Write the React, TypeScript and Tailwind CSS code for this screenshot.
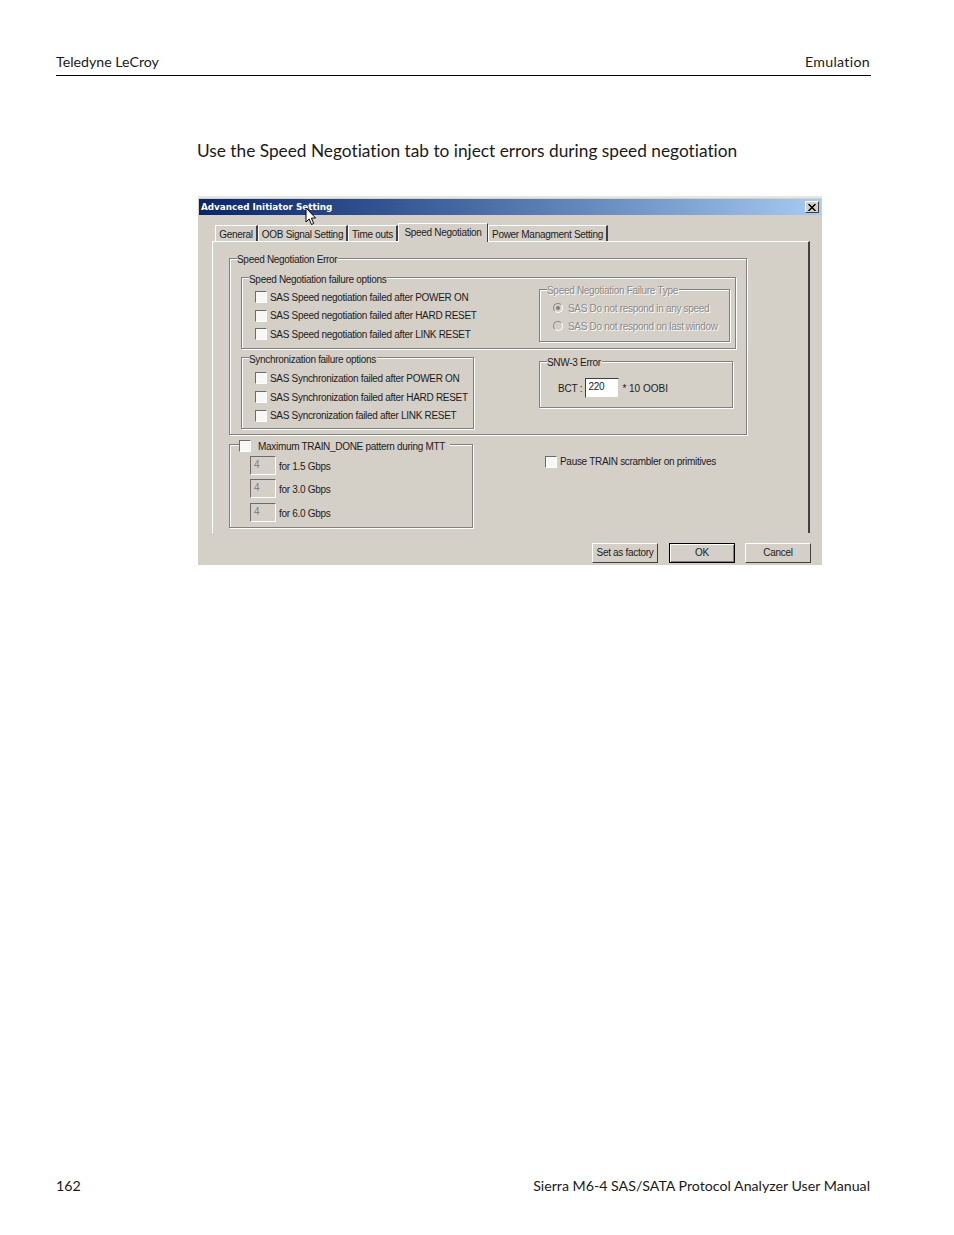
const ui = "font-['Liberation_Sans',Arial,sans-serif] text-[10px] tracking-[-0.3px] leading-[14px] text-[#1c1c1c] whitespace-nowrap";
const disabledText = "text-[#8a8a8a] [text-shadow:1px_1px_0_#ffffff]";

function Check({ label }: { label: string }) {
  return (
    <div className="flex items-center">
      <span className="w-3 h-3 shrink-0 bg-[#f7f7f5] border border-t-[#6b6b6b] border-l-[#6b6b6b] border-r-white border-b-white" />
      <span className="ml-[3px] mt-px">{label}</span>
    </div>
  );
}

function Radio({ label, on }: { label: string; on?: boolean }) {
  return (
    <div className="flex items-center h-[18px]">
      <span className="w-[10px] h-[10px] shrink-0 rounded-full border border-[#8a8a8a] border-r-white border-b-white bg-[#d4d0c8] flex items-center justify-center">
        {on && <span className="w-1 h-1 rounded-full bg-[#808080]" />}
      </span>
      <span className={`ml-[5px] mt-[2px] ${disabledText}`}>{label}</span>
    </div>
  );
}

function Group({ title, titleTop = "-top-[6px]", className, children }: { title?: string; titleTop?: string; className: string; children: React.ReactNode }) {
  return (
    <div className={`relative border border-[#808080] shadow-[inset_1px_1px_0_#ffffff,1px_1px_0_#ffffff] ${className}`}>
      {title && <span className={`absolute left-[7px] bg-[#d4d0c8] pr-px ${titleTop}`}>{title}</span>}
      {children}
    </div>
  );
}

function Tab({ label, active, className }: { label: string; active?: boolean; className: string }) {
  if (active) {
    return (
      <div className={`relative z-10 h-[19px] -mb-px flex items-center justify-center bg-[#d4d0c8] border-t border-l border-t-white border-l-white border-r border-r-[#404040] ${className}`}>
        <span className="-mt-px">{label}</span>
      </div>
    );
  }
  return (
    <div className={`h-[16px] flex items-center justify-center border-t border-l border-t-white border-l-white border-r-2 border-r-[#404040] ${className}`}>
      <span className="mt-[2px]">{label}</span>
    </div>
  );
}

function NumBox({ label }: { label: string }) {
  return (
    <div className="flex items-center h-[23.3px]">
      <span className="w-[26px] h-[19px] pl-[3px] pt-px text-[10px] leading-[13px] text-[#808080] border border-t-[#6b6b6b] border-l-[#6b6b6b] border-r-white border-b-white">4</span>
      <span className="ml-[3px] mt-[3px]">{label}</span>
    </div>
  );
}

function Btn({ label, def }: { label: string; def?: boolean }) {
  return (
    <div className={`w-[66px] h-[20px] flex items-center justify-center bg-[#d4d0c8] border ${def ? "ml-px border-black shadow-[inset_1px_1px_0_#ffffff,inset_-1px_-1px_0_#808080]" : "border-t-white border-l-white border-r-[#404040] border-b-[#404040]"}`}>
      {label}
    </div>
  );
}

function Dialog() {
  return (
    <div className={`relative w-[624px] h-[369px] ml-[198px] flex flex-col bg-[#d4d0c8] border-t-2 border-t-[#e8e6e0] pt-px pl-px ${ui}`}>
      <div className="w-[622px] h-[16px] flex items-center justify-between bg-gradient-to-r from-[#0a246a] to-[#a6caf0] pl-[2px] pr-[2px]">
        <span className="font-['DejaVu_Sans',sans-serif] font-bold text-[8.8px] tracking-normal text-white">Advanced Initiator Setting</span>
        <span className="w-[14px] h-[12px] flex items-center justify-center bg-[#d4d0c8] border border-t-white border-l-white border-r-[#404040] border-b-[#404040]">
          <svg width="8" height="7" viewBox="0 0 8 7"><path d="M0.5 0 L7.5 7 M7.5 0 L0.5 7" stroke="#000" strokeWidth="1.5" /></svg>
        </span>
      </div>
      <div className="h-[10px]" />
      <div className="flex items-end h-[16px] pl-[3px] ml-[13px]">
        <Tab label="General" className="w-[43px]" />
        <Tab label="OOB Signal Setting" className="w-[90px]" />
        <Tab label="Time outs" className="w-[50px]" />
        <Tab label="Speed Negotiation" active className="w-[90px]" />
        <Tab label="Power Managment Setting" className="w-[120px]" />
      </div>
      <div className="ml-[13px] w-[598px] h-[292px] border-t border-l border-t-white border-l-white border-r-2 border-r-[#404040] pl-[16px] pt-[16px]">
        <Group title="Speed Negotiation Error" className="w-[518px] h-[177px] pl-[11px] pt-[18px]">
          <Group title="Speed Negotiation failure options" titleTop="-top-[5px]" className="w-[495px] h-[72px] flex pl-[13px] pt-[10px]">
            <div className="w-[284px] flex flex-col">
              <div className="h-[18.5px] flex items-center"><Check label="SAS Speed negotiation failed after POWER ON" /></div>
              <div className="h-[18.5px] flex items-center"><Check label="SAS Speed negotiation failed after HARD RESET" /></div>
              <div className="h-[18.5px] flex items-center"><Check label="SAS Speed negotiation failed after LINK RESET" /></div>
            </div>
            <Group className="w-[191px] h-[53px] mt-[1px] pl-[13px] pt-[9px]">
              <span className={`absolute -top-[6px] left-[7px] bg-[#d4d0c8] pr-px ${disabledText}`}>Speed Negotiation Failure Type</span>
              <Radio label="SAS Do not respond in any speed" on />
              <Radio label="SAS Do not respond on last window" />
            </Group>
          </Group>
          <div className="flex mt-[8px]">
            <Group title="Synchronization failure options" titleTop="-top-[5px]" className="w-[233px] h-[72px] pl-[13px] pt-[11px]">
              <div className="h-[18.7px] flex items-center"><Check label="SAS Synchronization failed after POWER ON" /></div>
              <div className="h-[18.7px] flex items-center"><Check label="SAS Synchronization failed after HARD RESET" /></div>
              <div className="h-[18.7px] flex items-center"><Check label="SAS Syncronization failed after LINK RESET" /></div>
            </Group>
            <Group title="SNW-3 Error" className="w-[194px] h-[47px] ml-[65px] mt-[4px] flex items-center pl-[18px] pt-[6px]">
              <span className="tracking-[-0.2px] mt-[2px]">BCT :</span>
              <span className="w-[34px] h-[20px] ml-[3px] pl-[2px] pt-px bg-white border border-t-[#404040] border-l-[#404040] border-r-[#d4d0c8] border-b-[#d4d0c8]">220</span>
              <span className="ml-[3px] mt-[2px] tracking-normal">* 10 OOBI</span>
            </Group>
          </div>
        </Group>
        <div className="flex mt-[9px]">
          <Group className="w-[244px] h-[84px] pl-[20px] pt-[9px]">
            <div className="absolute -top-[5px] left-[9px] bg-[#d4d0c8] pr-[5px]">
              <div className="flex items-center">
                <span className="w-3 h-3 -mt-[2px] shrink-0 bg-[#f7f7f5] border border-t-[#6b6b6b] border-l-[#6b6b6b] border-r-white border-b-white" />
                <span className="ml-[7px]">Maximum TRAIN_DONE pattern during MTT</span>
              </div>
            </div>
            <NumBox label="for 1.5 Gbps" />
            <NumBox label="for 3.0 Gbps" />
            <NumBox label="for 6.0 Gbps" />
          </Group>
          <div className="ml-[72px] mt-[10px]">
            <Check label="Pause TRAIN scrambler on primitives" />
          </div>
        </div>
      </div>
      <div className="flex justify-end gap-[10px] w-[612px] mt-[10px]">
        <Btn label="Set as factory" />
        <Btn label="OK" def />
        <Btn label="Cancel" />
      </div>
      <svg className="absolute left-[107px] top-[9px]" width="12" height="19" viewBox="0 0 12 19">
        <path d="M1 1 L1 15 L4.2 12 L6.5 17.5 L8.7 16.5 L6.4 11.2 L10.6 11 Z" fill="#ffffff" stroke="#000000" strokeWidth="1" />
      </svg>
    </div>
  );
}

export default function App() {
  return (
    <div className="w-[954px] h-[1235px] bg-white flex flex-col font-['Lato','Open_Sans',sans-serif] text-[#1a1a1a] [font-variant-ligatures:none]">
      <div className="ml-[56px] w-[815px] h-[76px] pt-[53px] flex justify-between items-start border-b border-b-black text-[14.2px] leading-[18px] pr-px">
        <span>Teledyne LeCroy</span>
        <span className="tracking-[0.3px]">Emulation</span>
      </div>
      <p className="ml-[197px] mt-[64px] text-[17.3px] leading-[22px]">Use the Speed Negotiation tab to inject errors during speed negotiation</p>
      <div className="mt-[34px]">
        <Dialog />
      </div>
      <div className="mt-auto mb-[40px] ml-[56px] w-[814px] flex justify-between text-[14.2px] leading-[18px]">
        <span>162</span>
        <span>Sierra M6-4 SAS/SATA Protocol Analyzer User Manual</span>
      </div>
    </div>
  );
}
